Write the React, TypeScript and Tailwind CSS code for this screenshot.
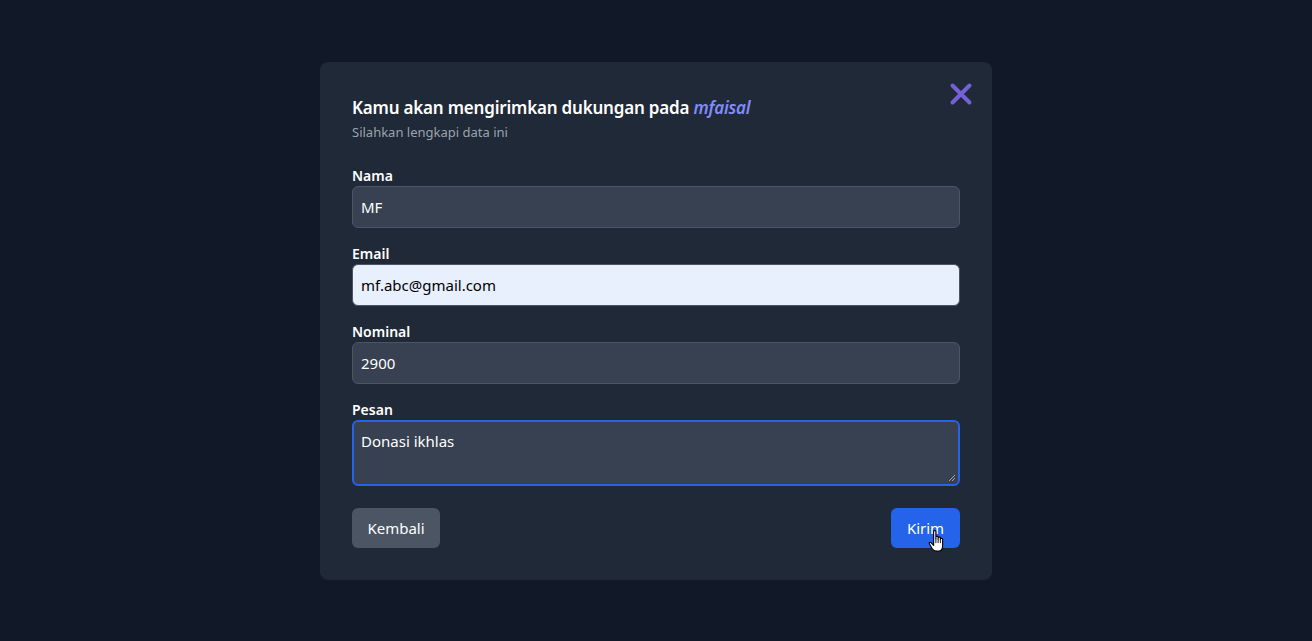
import React from "react";

const font = { fontFamily: '"Noto Sans", "Open Sans", sans-serif' };

function Field({ label, children }: { label: string; children: React.ReactNode }) {
  return (
    <div className="mb-4">
      <label className="block text-sm leading-5 font-semibold text-white">{label}</label>
      {children}
    </div>
  );
}

export default function App() {
  return (
    <div className="min-h-[641px] w-full bg-[#111827] flex justify-center pt-[62px]" style={font}>
      <div className="relative w-[672px] h-[518px] bg-[#1f2937] rounded-lg px-8 pt-8 pb-8">
        <button className="absolute right-[19px] top-[20px] w-[24px] h-[24px] flex items-center justify-center">
          <svg width="24" height="24" viewBox="0 0 24 24">
            <path d="M3.5 3.5 L20.5 20.5 M20.5 3.5 L3.5 20.5" stroke="#7660d8" strokeWidth="4" strokeLinecap="round" />
          </svg>
        </button>
        <h2 className="text-[17px] leading-7 font-semibold text-white tracking-[-0.2px]">
          Kamu akan mengirimkan dukungan pada <span className="italic text-[#818cf8]">mfaisal</span>
        </h2>
        <p className="text-[13px] leading-5 text-[#9ca3af] mb-6">Silahkan lengkapi data ini</p>

        <Field label="Nama">
          <div className="h-[42px] w-full rounded-md border border-[#4b5563] bg-[#374151] px-2 flex items-center text-white text-[15px]">
            MF
          </div>
        </Field>
        <Field label="Email">
          <div className="h-[42px] w-full rounded-md border border-[#4b5563] bg-[#e8f0fe] px-2 flex items-center text-black text-[15px]">
            mf.abc@gmail.com
          </div>
        </Field>
        <Field label="Nominal">
          <div className="h-[42px] w-full rounded-md border border-[#4b5563] bg-[#374151] px-2 flex items-center text-white text-[15px]">
            2900
          </div>
        </Field>
        <Field label="Pesan">
          <div className="relative h-[66px] w-full rounded-md border-2 border-[#2563eb] bg-[#374151] px-[7px] pt-[9px] text-white text-[15px] leading-5">
            Donasi ikhlas
            <svg className="absolute right-[2px] bottom-[2px]" width="8" height="8" viewBox="0 0 8 8">
              <path d="M7 1 L1 7 M7 4 L4 7" stroke="#9ca3af" strokeWidth="1" />
            </svg>
          </div>
        </Field>

        <div className="flex justify-between mt-[22px]">
          <button className="h-10 w-[88px] rounded-md bg-[#4b5563] text-white text-[15px]">Kembali</button>
          <div className="relative">
            <button className="h-10 w-[69px] rounded-md bg-[#2563eb] text-white text-[15px]">Kirim</button>
            <svg className="absolute left-[37px] top-[21px]" width="18" height="26" viewBox="0 0 16 22">
              <path
                d="M5 1.5 C5 0.7 7 0.7 7 1.5 L7 8 L7 6.5 C7 5.7 9 5.7 9 6.5 L9 8.5 L9 7.3 C9 6.5 11 6.5 11 7.3 L11 9 L11 8.3 C11 7.5 13 7.5 13 8.3 L13 14 C13 17 11.5 19 9.5 19 L7 19 C5.5 19 4.5 18 3.5 16.5 L1.2 12.5 C0.7 11.6 1.8 10.8 2.6 11.6 L5 14 Z"
                fill="white"
                stroke="black"
                strokeWidth="1"
                strokeLinejoin="round"
              />
              <path d="M7 8 L7 12 M9 8.5 L9 12 M11 9 L11 12" stroke="black" strokeWidth="0.8" />
            </svg>
          </div>
        </div>
      </div>
    </div>
  );
}
